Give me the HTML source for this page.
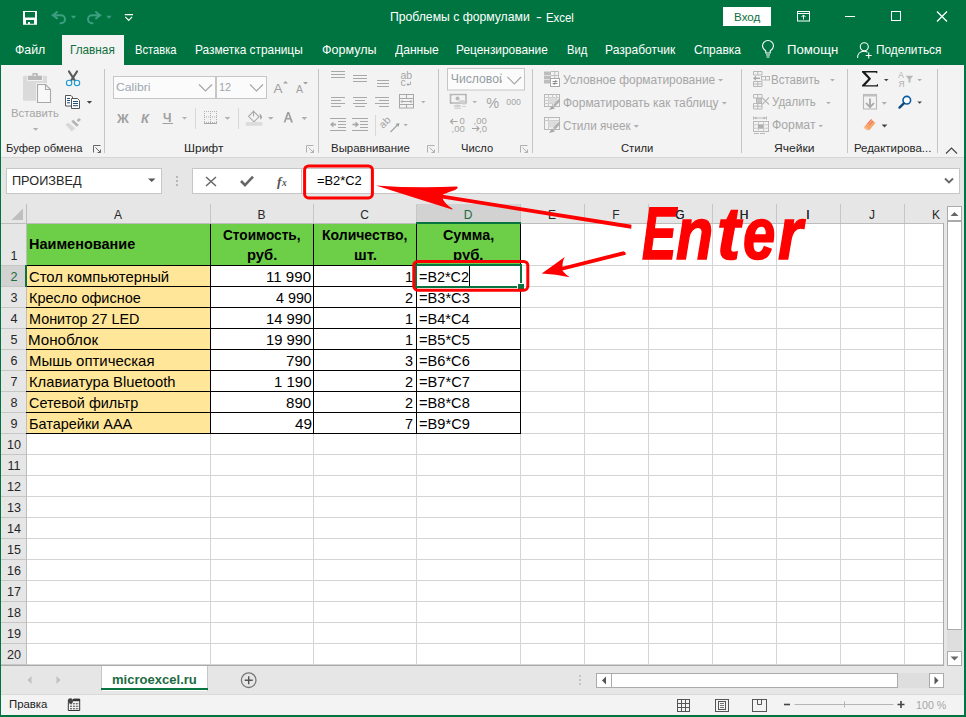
<!DOCTYPE html><html><head><meta charset="utf-8"><style>
*{box-sizing:border-box;margin:0;padding:0}
html,body{width:966px;height:717px;overflow:hidden;background:#fff;font-family:"Liberation Sans", sans-serif;}
.a{position:absolute;white-space:nowrap}
.t{position:absolute;white-space:nowrap;line-height:1}
</style></head><body>

<div class="a" style="left:0;top:0;width:966px;height:65px;background:#007440"></div>
<div class="t" style="left:390.02px;top:11.40px;font-size:12.4px;color:#fff;font-weight:normal;font-style:normal;transform:scaleX(0.9840);transform-origin:0 0;">Проблемы с формулами</div>
<div class="t" style="left:535.91px;top:11.40px;font-size:12.4px;color:#fff;font-weight:normal;font-style:normal;transform:scaleX(1.4154);transform-origin:0 0;">-</div>
<div class="t" style="left:546.49px;top:11.74px;font-size:12.0px;color:#fff;font-weight:normal;font-style:normal;transform:scaleX(0.9493);transform-origin:0 0;">Excel</div>
<svg class="a" style="left:0;top:0" width="160" height="35" viewBox="0 0 160 35"><path fill="#fff" fill-rule="evenodd" d="M23 11h14v13.7h-14z M25 12h10v5.5h-10z M26 20h8v3.7h-4v-1.7h-2v1.7h-2z"/><g fill="none" stroke="#3c9f80" stroke-width="2" stroke-linejoin="round" stroke-linecap="round"><path d="M57 12l-4 3.2 4 3.2M52.5 15.2h8.5a4 4 0 0 1 0 8h-0.5"/><path d="M96 12l4 3.2-4 3.2M100.5 15.2h-8.5a4 4 0 0 0 0 8h0.5"/></g><path fill="#3c9f80" d="M70.8 15.8h5.5l-2.75 3z M106.2 15.8h5.5l-2.75 3z"/><path fill="none" stroke="#fff" stroke-width="1.2" d="M124.8 14.6h8.2M125.3 16.8l3.4 3.6 3.4-3.6"/></svg>
<div class="a" style="left:723px;top:7px;width:48px;height:19px;background:#fff"></div>
<div class="t" style="left:733.67px;top:11.38px;font-size:11.6px;color:#107040;font-weight:normal;font-style:normal;transform:scaleX(1.0034);transform-origin:0 0;">Вход</div>
<svg class="a" style="left:780px;top:0" width="186" height="35" viewBox="780 0 186 35"><g fill="none" stroke="#fff" stroke-width="1"><rect x="797.5" y="11.5" width="12" height="9.5"/><path d="M798 13.5h11M803.5 19.5v-4.5M801.5 17l2-2 2 2"/><path d="M845 16.5h10"/><rect x="891.5" y="11.5" width="9" height="9"/><path d="M937 11.5l10 10M947 11.5l-10 10" stroke-width="1.3"/></g></svg>
<div class="t" style="left:15.22px;top:43.70px;font-size:12.4px;color:#fff;font-weight:normal;font-style:normal;transform:scaleX(0.9947);transform-origin:0 0;">Файл</div>
<div class="t" style="left:134.90px;top:43.70px;font-size:12.4px;color:#fff;font-weight:normal;font-style:normal;transform:scaleX(0.9030);transform-origin:0 0;">Вставка</div>
<div class="t" style="left:195.45px;top:43.70px;font-size:12.4px;color:#fff;font-weight:normal;font-style:normal;transform:scaleX(0.9578);transform-origin:0 0;">Разметка страницы</div>
<div class="t" style="left:321.61px;top:43.70px;font-size:12.4px;color:#fff;font-weight:normal;font-style:normal;transform:scaleX(1.0104);transform-origin:0 0;">Формулы</div>
<div class="t" style="left:395.04px;top:43.70px;font-size:12.4px;color:#fff;font-weight:normal;font-style:normal;transform:scaleX(0.9764);transform-origin:0 0;">Данные</div>
<div class="t" style="left:456.45px;top:43.70px;font-size:12.4px;color:#fff;font-weight:normal;font-style:normal;transform:scaleX(0.9599);transform-origin:0 0;">Рецензирование</div>
<div class="t" style="left:566.50px;top:43.70px;font-size:12.4px;color:#fff;font-weight:normal;font-style:normal;transform:scaleX(0.9055);transform-origin:0 0;">Вид</div>
<div class="t" style="left:605.44px;top:43.70px;font-size:12.4px;color:#fff;font-weight:normal;font-style:normal;transform:scaleX(0.9725);transform-origin:0 0;">Разработчик</div>
<div class="t" style="left:694.10px;top:43.70px;font-size:12.4px;color:#fff;font-weight:normal;font-style:normal;transform:scaleX(0.9648);transform-origin:0 0;">Справка</div>
<div class="t" style="left:787.25px;top:43.70px;font-size:12.4px;color:#fff;font-weight:normal;font-style:normal;transform:scaleX(1.0616);transform-origin:0 0;">Помощн</div>
<div class="t" style="left:875.65px;top:43.70px;font-size:12.4px;color:#fff;font-weight:normal;font-style:normal;transform:scaleX(0.9557);transform-origin:0 0;">Поделиться</div>
<div class="a" style="left:62px;top:35px;width:62px;height:31px;background:#f3f3f3"></div>
<div class="t" style="left:70.26px;top:43.70px;font-size:12.4px;color:#107040;font-weight:normal;font-style:normal;transform:scaleX(0.9497);transform-origin:0 0;">Главная</div>
<svg class="a" style="left:750px;top:35px" width="140" height="30" viewBox="750 35 140 30"><g fill="none" stroke="#fff" stroke-width="1.1"><path d="M766 55h4M766.5 57h3M765.8 53v-2c-2-1.5-3.3-3-3.3-5a5.5 5.5 0 0 1 11 0c0 2-1.3 3.5-3.3 5v2z"/><circle cx="864.3" cy="46.8" r="4"/><path d="M857.5 58c0-4 2.5-6.8 6.5-6.8c1.5 0 2.5 .3 3.5 1M868.7 52.5v6M865.7 55.5h6"/></g></svg>
<div class="a" style="left:1px;top:65px;width:963px;height:92px;background:#f3f3f3"></div>
<div class="a" style="left:1px;top:157px;width:963px;height:1px;background:#d6d6d6"></div>
<svg class="a" style="left:0;top:65px" width="966" height="92" viewBox="0 65 966 92"><path d="M104.5 69v84" stroke="#c4c4c4" stroke-width="1"/><path d="M318.5 69v84" stroke="#c4c4c4" stroke-width="1"/><path d="M438.5 69v84" stroke="#c4c4c4" stroke-width="1"/><path d="M532.5 69v84" stroke="#c4c4c4" stroke-width="1"/><path d="M741.5 69v84" stroke="#c4c4c4" stroke-width="1"/><path d="M847.5 69v84" stroke="#c4c4c4" stroke-width="1"/><path d="M937.5 69v84" stroke="#c4c4c4" stroke-width="1"/><path d="M195.5 108v21M238.5 108v21M375.5 115v21" stroke="#d8d8d8"/><path d="M32.9 128h5.5l-2.75 2.75z" fill="#b0b0b0"/><path d="M86.8 101h5.299999999999997l-2.6499999999999986 2.6499999999999986z" fill="#444"/><path d="M182 117h5l-2.5 2.5z" fill="#b0b0b0"/><path d="M224.6 117h5.700000000000017l-2.8500000000000085 2.8500000000000085z" fill="#b0b0b0"/><path d="M267.9 117h5.7000000000000455l-2.8500000000000227 2.8500000000000227z" fill="#b0b0b0"/><path d="M301.4 117h5.900000000000034l-2.950000000000017 2.950000000000017z" fill="#b0b0b0"/><path d="M421 101h4.5l-2.25 2.25z" fill="#b0b0b0"/><path d="M403.4 124h4.600000000000023l-2.3000000000000114 2.3000000000000114z" fill="#b0b0b0"/><path d="M472.4 101h4.600000000000023l-2.3000000000000114 2.3000000000000114z" fill="#b0b0b0"/><path d="M718 79h5.2000000000000455l-2.6000000000000227 2.6000000000000227z" fill="#b0b0b0"/><path d="M721.8 102h5.2000000000000455l-2.6000000000000227 2.6000000000000227z" fill="#b0b0b0"/><path d="M633.6 125h5.2999999999999545l-2.6499999999999773 2.6499999999999773z" fill="#b0b0b0"/><path d="M830 79h4.7999999999999545l-2.3999999999999773 2.3999999999999773z" fill="#b0b0b0"/><path d="M826.1 102h4.699999999999932l-2.349999999999966 2.349999999999966z" fill="#b0b0b0"/><path d="M818.4 125h4.600000000000023l-2.3000000000000114 2.3000000000000114z" fill="#b0b0b0"/><path d="M881.6 102h5.399999999999977l-2.6999999999999886 2.6999999999999886z" fill="#b0b0b0"/><path d="M917.3 79h4.7000000000000455l-2.3500000000000227 2.3500000000000227z" fill="#b0b0b0"/><path d="M883.9 79h4.7000000000000455l-2.3500000000000227 2.3500000000000227z" fill="#444"/><path d="M917.3 101.5h4.7000000000000455l-2.3500000000000227 2.3500000000000227z" fill="#444"/><path d="M881.6 124.5h5.7999999999999545l-2.8999999999999773 2.8999999999999773z" fill="#444"/><path d="M306.5 152.5v-7h7M308.5 147.5l5 5M313.5 149.5v3h-3" fill="none" stroke="#b0b0b0" stroke-width="1"/><path d="M427.5 152.5v-7h7M429.5 147.5l5 5M434.5 149.5v3h-3" fill="none" stroke="#b0b0b0" stroke-width="1"/><path d="M520.5 152.5v-7h7M522.5 147.5l5 5M527.5 149.5v3h-3" fill="none" stroke="#b0b0b0" stroke-width="1"/><path d="M93.5 152.5v-7h7M95.5 147.5l5 5M100.5 149.5v3h-3" fill="none" stroke="#666" stroke-width="1"/><path d="M946 153.5l5.5-5.5 5.5 5.5" fill="none" stroke="#444" stroke-width="1.1"/><rect x="23" y="75.8" width="24" height="25" rx="1.2" fill="#dadada"/><path d="M27.3 81v-5.8h4.5v-2.5h6.6v2.5h4.5v5.8z" fill="#f3f3f3"/><path d="M28 80v-4.2h4.5v-2.8h5.3v2.8h4.2v4.2z" fill="#b8b8b8"/><rect x="34" y="74.5" width="1.8" height="1.6" fill="#f3f3f3"/><path d="M36 83h10l6 6v14.8h-16z" fill="#f3f3f3"/><path d="M37.5 84.5h8l5 5v13h-13z" fill="#f8f8f8" stroke="#a8a8a8" stroke-width="1.1"/><path d="M45.5 84.5v5h5" fill="none" stroke="#a8a8a8" stroke-width="1.1"/><path d="M69 71.5L74.5 80M77 71.5L71.5 80" stroke="#595959" stroke-width="2.2" stroke-linecap="round"/><circle cx="69.1" cy="83" r="2.7" fill="#f3f3f3" stroke="#1c9bd0" stroke-width="1.1"/><circle cx="77" cy="83" r="2.7" fill="#f3f3f3" stroke="#1c9bd0" stroke-width="1.1"/><path d="M65.5 95.5h5.5l1.5 1.5v9h-7z" fill="#fff" stroke="#555"/><path d="M71.5 98.5h6l2 2v8h-8z" fill="#fff" stroke="#555"/><path d="M67 98.5h3M67 100.5h3M67 102.8h3M73 101.5h5M73 103.5h5M73 105.7h5" stroke="#1f4e79" stroke-width="1"/><path d="M65.4 124.4L68.5 122.8L75.4 128.2L71.7 131.4z" fill="#d8d8d8"/><path d="M71.2 121.6L73.2 119.8L78.9 124.9L76.8 126.8z" fill="#b4b4b4"/><path d="M76.6 120.3L79 117.9L81 119.8L78.5 122.1z" fill="#b4b4b4"/><rect x="113.5" y="76.5" width="102" height="22" fill="#fbfbfb" stroke="#c6c6c6"/><rect x="216.5" y="76.5" width="50" height="22" fill="#fbfbfb" stroke="#c6c6c6"/><path d="M199 84.5l6.5 6.5 6.5-6.5M250 84.5l6.5 6.5 6.5-6.5" fill="none" stroke="#a6a6a6" stroke-width="1.2"/><rect x="447.5" y="68.5" width="77" height="21.5" fill="#fbfbfb" stroke="#c6c6c6"/><path d="M507.5 77l6.8 6.8 6.8-6.8" fill="none" stroke="#a6a6a6" stroke-width="1.2"/><text x="273.5" y="92.8" font-family="Liberation Sans" font-size="13.5" fill="#a0a0a0">A</text><path d="M283 83.5l2.5-2.5 2.5 2.5z" fill="#a0a0a0"/><text x="296" y="92.8" font-family="Liberation Sans" font-size="10.5" fill="#a0a0a0">A</text><path d="M303 82h5l-2.5 2.5z" fill="#a0a0a0"/><text x="117" y="123" font-family="Liberation Sans" font-weight="bold" font-size="13" fill="#a0a0a0">Ж</text><text x="141" y="123" font-family="Liberation Sans" font-weight="bold" font-style="italic" font-size="13" fill="#a0a0a0">К</text><text x="163" y="121.5" font-family="Liberation Sans" font-weight="bold" font-size="12" fill="#a0a0a0">Ч</text><path d="M162.5 123.5h10.5" stroke="#a0a0a0" stroke-width="1"/><g fill="#b4b4b4"><rect x="204.0" y="111.0" width="1" height="1"/><rect x="204.0" y="116.5" width="1" height="1"/><rect x="204.0" y="122.0" width="1" height="1"/><rect x="206.0" y="111.0" width="1" height="1"/><rect x="206.0" y="116.5" width="1" height="1"/><rect x="206.0" y="122.0" width="1" height="1"/><rect x="208.0" y="111.0" width="1" height="1"/><rect x="208.0" y="116.5" width="1" height="1"/><rect x="208.0" y="122.0" width="1" height="1"/><rect x="210.0" y="111.0" width="1" height="1"/><rect x="210.0" y="116.5" width="1" height="1"/><rect x="210.0" y="122.0" width="1" height="1"/><rect x="212.0" y="111.0" width="1" height="1"/><rect x="212.0" y="116.5" width="1" height="1"/><rect x="212.0" y="122.0" width="1" height="1"/><rect x="214.0" y="111.0" width="1" height="1"/><rect x="214.0" y="116.5" width="1" height="1"/><rect x="214.0" y="122.0" width="1" height="1"/><rect x="216.0" y="111.0" width="1" height="1"/><rect x="216.0" y="116.5" width="1" height="1"/><rect x="216.0" y="122.0" width="1" height="1"/><rect x="204.0" y="111.0" width="1" height="1"/><rect x="204.0" y="113.0" width="1" height="1"/><rect x="204.0" y="115.0" width="1" height="1"/><rect x="204.0" y="117.0" width="1" height="1"/><rect x="204.0" y="119.0" width="1" height="1"/><rect x="204.0" y="121.0" width="1" height="1"/><rect x="210.0" y="111.0" width="1" height="1"/><rect x="210.0" y="113.0" width="1" height="1"/><rect x="210.0" y="115.0" width="1" height="1"/><rect x="210.0" y="117.0" width="1" height="1"/><rect x="210.0" y="119.0" width="1" height="1"/><rect x="210.0" y="121.0" width="1" height="1"/><rect x="216.0" y="111.0" width="1" height="1"/><rect x="216.0" y="113.0" width="1" height="1"/><rect x="216.0" y="115.0" width="1" height="1"/><rect x="216.0" y="117.0" width="1" height="1"/><rect x="216.0" y="119.0" width="1" height="1"/><rect x="216.0" y="121.0" width="1" height="1"/></g><path d="M204 123.5h13" stroke="#a8a8a8" stroke-width="1"/><path d="M248.5 116.3l5-5 5.5 5.5-5 5z" fill="none" stroke="#a8a8a8" stroke-width="1.1"/><path d="M253.5 110.5v6" stroke="#a8a8a8" stroke-width="1.1"/><path d="M259.5 113.5q2.5 1.5 2.5 4l-1.5 2.5z" fill="#a0a0a0"/><rect x="245.8" y="122" width="16.5" height="3.8" fill="#dcdcdc"/><path d="M283.6 122.5l3.7-10.6h1.9l3.8 10.6h-2l-1-2.9h-3.6l-1 2.9zM287.1 118h2.4l-1.2-3.7z" fill="#a0a0a0"/><path d="M331 71.5H345" stroke="#a8a8a8" stroke-width="1"/><path d="M331 74.5H345" stroke="#a8a8a8" stroke-width="1"/><path d="M331 77.5H345" stroke="#a8a8a8" stroke-width="1"/><path d="M353 75.5H367" stroke="#a8a8a8" stroke-width="1"/><path d="M353 78.5H367" stroke="#a8a8a8" stroke-width="1"/><path d="M353 81.5H367" stroke="#a8a8a8" stroke-width="1"/><path d="M377 80.5H389" stroke="#a8a8a8" stroke-width="1"/><path d="M377 83.5H389" stroke="#a8a8a8" stroke-width="1"/><path d="M377 86.5H389" stroke="#a8a8a8" stroke-width="1"/><path d="M331 97.5H345" stroke="#a8a8a8" stroke-width="1"/><path d="M331 100.5H341" stroke="#a8a8a8" stroke-width="1"/><path d="M331 103.5H345" stroke="#a8a8a8" stroke-width="1"/><path d="M331 106.5H341" stroke="#a8a8a8" stroke-width="1"/><path d="M353 97.5H367" stroke="#a8a8a8" stroke-width="1"/><path d="M355 100.5H365" stroke="#a8a8a8" stroke-width="1"/><path d="M353 103.5H367" stroke="#a8a8a8" stroke-width="1"/><path d="M355 106.5H365" stroke="#a8a8a8" stroke-width="1"/><path d="M375 97.5H389" stroke="#a8a8a8" stroke-width="1"/><path d="M379 100.5H389" stroke="#a8a8a8" stroke-width="1"/><path d="M375 103.5H389" stroke="#a8a8a8" stroke-width="1"/><path d="M379 106.5H389" stroke="#a8a8a8" stroke-width="1"/><text x="400.5" y="78.8" font-family="Liberation Sans" font-size="10.5" fill="#a6a6a6">ab</text><text x="400.5" y="86.3" font-family="Liberation Sans" font-size="10.5" fill="#a6a6a6">c</text><path d="M410.5 81.5v3h-3.5M408.5 83l-1.5 1.5 1.5 1.5" fill="none" stroke="#a6a6a6" stroke-width=".9"/><rect x="399.5" y="94.5" width="14" height="13.5" fill="none" stroke="#a8a8a8"/><path d="M399.5 98.5h14M399.5 104.5h14M406.5 94.5v4M406.5 104.5v3.5M401.5 101.5h10M402.5 100l-1.5 1.5 1.5 1.5M410.5 100l1.5 1.5-1.5 1.5" fill="none" stroke="#a8a8a8"/><path d="M330 118.5h16M338 121.5h8M338 124.5h8M338 127.5h8M330 130.5h16" fill="none" stroke="#a8a8a8"/><path d="M331 124.5h5" stroke="#a8a8a8" stroke-width="1.8"/><path d="M330 124.5l3.5-3v6z" fill="#a8a8a8"/><path d="M352 118.5h16M360 121.5h8M360 124.5h8M360 127.5h8M352 130.5h16" fill="none" stroke="#a8a8a8"/><path d="M352.5 124.5h5" stroke="#a8a8a8" stroke-width="1.8"/><path d="M359 124.5l-3.5-3v6z" fill="#a8a8a8"/><text x="383" y="129" font-family="Liberation Sans" font-size="10.5" fill="#a6a6a6" transform="rotate(-45 383 129)">ab</text><path d="M390.5 132l8-8" fill="none" stroke="#a0a0a0" stroke-width="1.1"/><path d="M399.5 123l-1 4-3-3z" fill="#a0a0a0"/><path d="M450.5 94.5h15.5v8.5h-15.5z" fill="none" stroke="#b8b8b8" stroke-width="1.6"/><path d="M450 94h3l-3 3zM466.5 94h-3l3 3zM450 103.5h3l-3-3z" fill="#b8b8b8"/><circle cx="457.5" cy="98.6" r="2" fill="#b8b8b8"/><ellipse cx="462" cy="101.5" rx="3.5" ry="1.5" fill="#d0d0d0"/><ellipse cx="457.5" cy="106" rx="3.5" ry="1.5" fill="#d0d0d0"/><path d="M454 108.5h7M462 104h4M462 106.5h4" stroke="#d4d4d4" stroke-width="1.1"/><text x="486.3" y="107.8" font-family="Liberation Sans" font-size="14.5" fill="#a6a6a6">%</text><text x="506.3" y="104.9" font-family="Liberation Sans" font-size="9.6" fill="#a6a6a6" textLength="14.6" lengthAdjust="spacingAndGlyphs">000</text><text x="459.5" y="124" font-family="Liberation Sans" font-size="9.5" fill="#a6a6a6">0</text><text x="451.5" y="131.5" font-family="Liberation Sans" font-size="9.5" fill="#a6a6a6">,00</text><path d="M450.5 121.5h7M453 119l-2.5 2.5 2.5 2.5" fill="none" stroke="#a6a6a6" stroke-width="1.1"/><text x="473.5" y="124" font-family="Liberation Sans" font-size="9.5" fill="#a6a6a6">,00</text><text x="479" y="131.5" font-family="Liberation Sans" font-size="9.5" fill="#a6a6a6">,0</text><path d="M472 128.5h7M476.5 126l2.5 2.5-2.5 2.5" fill="none" stroke="#a6a6a6" stroke-width="1.1"/><rect x="544" y="71.5" width="7" height="12" fill="#bdbdbd"/><path d="M544 75.5h7M544 79.5h7" stroke="#dedede"/><path d="M551 71.5h7.5v12M551 75.5h7.5M554.75 71.5v7" fill="none" stroke="#bdbdbd"/><rect x="550.5" y="78.5" width="9" height="8" fill="#fff" stroke="#a8a8a8"/><path d="M552.5 81.5h5M552.5 83.5h5M556 80l-2 5" stroke="#777" stroke-width=".8"/><rect x="544.5" y="94.5" width="15" height="12" fill="none" stroke="#b8b8b8"/><path d="M544.5 97.5h15M544.5 100.5h11M544.5 103.5h8M548.5 94.5v12M552.5 94.5v12M556.5 94.5v6" stroke="#c8c8c8"/><rect x="548.5" y="97.5" width="8" height="6" fill="#dcdcdc"/><path d="M553 105l7-7.5v4l-5 5z" fill="#b0b0b0"/><path d="M549 110l3-4.5 3 3z" fill="#a8a8a8"/><rect x="544.5" y="117.5" width="15" height="12" fill="none" stroke="#b8b8b8"/><path d="M544.5 120.5h15M548.5 117.5v12" stroke="#c8c8c8"/><rect x="548.5" y="120.5" width="9" height="7" fill="#dcdcdc"/><path d="M553 128l7-7.5v4l-5 5z" fill="#b0b0b0"/><path d="M549 133l3-4.5 3 3z" fill="#a8a8a8"/><path d="M753.5 71.5h8.5v3.5h-8.5zM757.75 71.5v3.5M753.5 81.5h8.5v5h-8.5zM753.5 84h8.5M757.75 81.5v5" fill="none" stroke="#b8b8b8"/><rect x="761.5" y="76.5" width="8" height="3.5" fill="none" stroke="#b8b8b8"/><path d="M765.5 76.5v3.5" stroke="#b8b8b8"/><path d="M754 78.3h6" stroke="#a8a8a8" stroke-width="1.4"/><path d="M753 78.3l3-2.5v5z" fill="#a8a8a8"/><path d="M753.5 94.5h8.5v3.5h-8.5zM757.75 94.5v3.5M753.5 103.5h8.5v5.5h-8.5zM753.5 106.2h8.5M757.75 103.5v5.5" fill="none" stroke="#b8b8b8"/><rect x="756.5" y="98.5" width="5" height="4.5" fill="#c8c8c8" stroke="#b8b8b8"/><path d="M762 97.5l7 7M769 97.5l-7 7" stroke="#b8b8b8" stroke-width="1.2"/><path d="M753.5 116.5v3M766.5 116.5v3M754 118h12" stroke="#b8b8b8"/><path d="M754 118l2.5-1.5v3zM766 118l-2.5-1.5v3z" fill="#b8b8b8"/><rect x="753.5" y="121.5" width="15" height="10" fill="none" stroke="#b8b8b8"/><path d="M753.5 124.8h15M753.5 128.2h15M758.5 121.5v10M763.5 121.5v10" stroke="#cacaca"/><rect x="758" y="124.5" width="5.5" height="4" fill="#b0b0b0"/><path d="M754 133.5h5M760 133.5h5" stroke="#b8b8b8"/><path d="M862 71h15.3v2.3h-0.8l-0.6-0.9h-10.4l5.6 6.3-5.8 6.5h11.2l.6-.9h.9v2.2H862v-1.3l6.3-6.5-6.3-6.4z" fill="#1a1a1a"/><text x="898.3" y="77.8" font-family="Liberation Sans" font-size="8.4" fill="#b0b0b0">А</text><text x="898.5" y="86.5" font-family="Liberation Sans" font-size="8.4" fill="#b0b0b0">Я</text><path d="M905.8 75.8h7.3l-2.6 3.5v3.3h-2v-3.3z" fill="#b8b8b8"/><rect x="863.5" y="94.5" width="13" height="14.5" fill="none" stroke="#b8b8b8" stroke-width="1.1"/><rect x="863.5" y="94.5" width="13" height="2" fill="#c0c0c0"/><path d="M870 98.5v8" stroke="#a8a8a8" stroke-width="1.8"/><path d="M866 103l4 4.2 4-4.2" fill="none" stroke="#a8a8a8" stroke-width="1.8"/><circle cx="906.8" cy="100.2" r="3.8" fill="#fff" stroke="#0a5a9c" stroke-width="1.6"/><path d="M903.8 103.3l-4.3 4.3" stroke="#0b4a80" stroke-width="2.4" stroke-linecap="round"/><path d="M864.5 126.5l6.5-7.5 4.5 4-6.5 7.5z" fill="#f7a66c"/><path d="M867.5 124l4-4.5M869 125.5l4-4.5" stroke="#ee6a6a" stroke-width="1"/><path d="M864 127l3.5 3" stroke="#f9b987" stroke-width="1.4"/></svg>
<div class="t" style="left:5.70px;top:143.45px;font-size:11.4px;color:#262626;font-weight:normal;font-style:normal;transform:scaleX(0.9876);transform-origin:0 0;">Буфер обмена</div>
<div class="t" style="left:183.74px;top:143.05px;font-size:11.4px;color:#262626;font-weight:normal;font-style:normal;transform:scaleX(1.0532);transform-origin:0 0;">Шрифт</div>
<div class="t" style="left:330.78px;top:143.05px;font-size:11.4px;color:#262626;font-weight:normal;font-style:normal;transform:scaleX(1.0051);transform-origin:0 0;">Выравнивание</div>
<div class="t" style="left:460.61px;top:143.05px;font-size:11.4px;color:#262626;font-weight:normal;font-style:normal;transform:scaleX(0.9807);transform-origin:0 0;">Число</div>
<div class="t" style="left:621.04px;top:143.05px;font-size:11.4px;color:#262626;font-weight:normal;font-style:normal;transform:scaleX(0.9853);transform-origin:0 0;">Стили</div>
<div class="t" style="left:774.00px;top:142.55px;font-size:11.4px;color:#262626;font-weight:normal;font-style:normal;transform:scaleX(1.0602);transform-origin:0 0;">Ячейки</div>
<div class="t" style="left:853.69px;top:142.55px;font-size:11.4px;color:#262626;font-weight:normal;font-style:normal;transform:scaleX(1.0006);transform-origin:0 0;">Редактирова...</div>
<div class="t" style="left:10.80px;top:108.01px;font-size:11.8px;color:#a6a6a6;font-weight:normal;font-style:normal;transform:scaleX(0.9585);transform-origin:0 0;">Вставить</div>
<div class="t" style="left:116.19px;top:81.91px;font-size:11.8px;color:#9ea7b0;font-weight:normal;font-style:normal;transform:scaleX(1.0332);transform-origin:0 0;">Calibri</div>
<div class="t" style="left:219.19px;top:81.91px;font-size:11.8px;color:#9ea7b0;font-weight:normal;font-style:normal;transform:scaleX(0.9206);transform-origin:0 0;">12</div>
<div class="a" style="left:450px;top:72px;width:52px;height:16px;overflow:hidden">
<div class="t" style="left:0.8px;top:0.97px;font-size:12.2px;color:#949ca4;font-weight:normal;font-style:normal;">Числовой</div>
</div>
<div class="t" style="left:563.34px;top:74.24px;font-size:12.0px;color:#a6a6a6;font-weight:normal;font-style:normal;transform:scaleX(0.9971);transform-origin:0 0;">Условное форматирование</div>
<div class="t" style="left:563.04px;top:96.94px;font-size:12.0px;color:#a6a6a6;font-weight:normal;font-style:normal;transform:scaleX(0.9964);transform-origin:0 0;">Форматировать как таблицу</div>
<div class="t" style="left:563.11px;top:119.74px;font-size:12.0px;color:#a6a6a6;font-weight:normal;font-style:normal;transform:scaleX(0.9753);transform-origin:0 0;">Стили ячеек</div>
<div class="t" style="left:771.38px;top:74.04px;font-size:12.0px;color:#a6a6a6;font-weight:normal;font-style:normal;transform:scaleX(0.9567);transform-origin:0 0;">Вставить</div>
<div class="t" style="left:771.96px;top:96.44px;font-size:12.0px;color:#a6a6a6;font-weight:normal;font-style:normal;transform:scaleX(0.9568);transform-origin:0 0;">Удалить</div>
<div class="t" style="left:771.63px;top:119.14px;font-size:12.0px;color:#a6a6a6;font-weight:normal;font-style:normal;transform:scaleX(1.0201);transform-origin:0 0;">Формат</div>
<div class="a" style="left:1px;top:158px;width:963px;height:536px;background:#e6e6e6"></div>
<div class="a" style="left:6px;top:168px;width:156px;height:26px;background:#fff;border:1px solid #c6c6c6"></div>
<div class="t" style="left:12.48px;top:175.46px;font-size:12.8px;color:#262626;font-weight:normal;font-style:normal;transform:scaleX(0.9918);transform-origin:0 0;">ПРОИЗВЕД</div>
<svg class="a" style="left:140px;top:165px" width="60" height="30" viewBox="140 165 60 30"><path d="M148 178.5h7.5l-3.75 3.5z" fill="#555"/><circle cx="177" cy="177" r=".9" fill="#a0a0a0"/><circle cx="177" cy="181" r=".9" fill="#a0a0a0"/><circle cx="177" cy="185" r=".9" fill="#a0a0a0"/></svg>
<div class="a" style="left:192px;top:168px;width:110px;height:26px;background:#fff;border:1px solid #c6c6c6"></div>
<div class="a" style="left:301px;top:168px;width:659px;height:26px;background:#fff;border:1px solid #c6c6c6"></div>
<svg class="a" style="left:190px;top:165px" width="780" height="35" viewBox="190 165 780 35"><path d="M206 177l10 9M216 177l-10 9" stroke="#666" stroke-width="1.5"/><path d="M241 181l4 4.2 8-8.5" fill="none" stroke="#666" stroke-width="2.6"/><text x="277" y="185.5" font-family="Liberation Serif" font-style="italic" font-weight="bold" font-size="13.5" fill="#555">f</text><text x="282" y="186" font-family="Liberation Serif" font-style="italic" font-weight="bold" font-size="9.5" fill="#555">x</text><path d="M945 178.5l4 4 4-4" fill="none" stroke="#666" stroke-width="1.8"/></svg>
<div class="t" style="left:316.86px;top:175.16px;font-size:12.8px;color:#000;font-weight:normal;font-style:normal;transform:scaleX(1.0069);transform-origin:0 0;">=B2*C2</div>
<div class="a" style="left:27px;top:224px;width:917px;height:442px;background:#fff"></div>
<div class="a" style="left:417px;top:204px;width:103px;height:19px;background:#d2d2d2"></div>
<div class="a" style="left:0;top:266px;width:26px;height:20px;background:#d2d2d2"></div>
<div class="a" style="left:210px;top:204px;width:1px;height:20px;background:#c6c6c6"></div>
<div class="a" style="left:210px;top:224px;width:1px;height:442px;background:#d4d4d4"></div>
<div class="t" style="left:88.0px;width:60px;text-align:center;top:208.94px;font-size:12.0px;color:#262626;font-weight:normal;font-style:normal;">A</div>
<div class="a" style="left:313px;top:204px;width:1px;height:20px;background:#c6c6c6"></div>
<div class="a" style="left:313px;top:224px;width:1px;height:442px;background:#d4d4d4"></div>
<div class="t" style="left:231.5px;width:60px;text-align:center;top:208.94px;font-size:12.0px;color:#262626;font-weight:normal;font-style:normal;">B</div>
<div class="a" style="left:416px;top:204px;width:1px;height:20px;background:#c6c6c6"></div>
<div class="a" style="left:416px;top:224px;width:1px;height:442px;background:#d4d4d4"></div>
<div class="t" style="left:334.5px;width:60px;text-align:center;top:208.94px;font-size:12.0px;color:#262626;font-weight:normal;font-style:normal;">C</div>
<div class="a" style="left:520px;top:204px;width:1px;height:20px;background:#c6c6c6"></div>
<div class="a" style="left:520px;top:224px;width:1px;height:442px;background:#d4d4d4"></div>
<div class="t" style="left:438.0px;width:60px;text-align:center;top:208.94px;font-size:12.0px;color:#1e6b43;font-weight:normal;font-style:normal;">D</div>
<div class="a" style="left:584px;top:204px;width:1px;height:20px;background:#c6c6c6"></div>
<div class="a" style="left:584px;top:224px;width:1px;height:442px;background:#d4d4d4"></div>
<div class="t" style="left:522.0px;width:60px;text-align:center;top:208.94px;font-size:12.0px;color:#262626;font-weight:normal;font-style:normal;">E</div>
<div class="a" style="left:648px;top:204px;width:1px;height:20px;background:#c6c6c6"></div>
<div class="a" style="left:648px;top:224px;width:1px;height:442px;background:#d4d4d4"></div>
<div class="t" style="left:586.0px;width:60px;text-align:center;top:208.94px;font-size:12.0px;color:#262626;font-weight:normal;font-style:normal;">F</div>
<div class="a" style="left:712px;top:204px;width:1px;height:20px;background:#c6c6c6"></div>
<div class="a" style="left:712px;top:224px;width:1px;height:442px;background:#d4d4d4"></div>
<div class="t" style="left:650.0px;width:60px;text-align:center;top:208.94px;font-size:12.0px;color:#262626;font-weight:normal;font-style:normal;">G</div>
<div class="a" style="left:776px;top:204px;width:1px;height:20px;background:#c6c6c6"></div>
<div class="a" style="left:776px;top:224px;width:1px;height:442px;background:#d4d4d4"></div>
<div class="t" style="left:714.0px;width:60px;text-align:center;top:208.94px;font-size:12.0px;color:#262626;font-weight:normal;font-style:normal;">H</div>
<div class="a" style="left:840px;top:204px;width:1px;height:20px;background:#c6c6c6"></div>
<div class="a" style="left:840px;top:224px;width:1px;height:442px;background:#d4d4d4"></div>
<div class="t" style="left:778.0px;width:60px;text-align:center;top:208.94px;font-size:12.0px;color:#262626;font-weight:normal;font-style:normal;">I</div>
<div class="a" style="left:904px;top:204px;width:1px;height:20px;background:#c6c6c6"></div>
<div class="a" style="left:904px;top:224px;width:1px;height:442px;background:#d4d4d4"></div>
<div class="t" style="left:842.0px;width:60px;text-align:center;top:208.94px;font-size:12.0px;color:#262626;font-weight:normal;font-style:normal;">J</div>
<div class="a" style="left:968px;top:204px;width:1px;height:20px;background:#c6c6c6"></div>
<div class="a" style="left:968px;top:224px;width:1px;height:442px;background:#d4d4d4"></div>
<div class="t" style="left:906.0px;width:60px;text-align:center;top:208.94px;font-size:12.0px;color:#262626;font-weight:normal;font-style:normal;">K</div>
<div class="a" style="left:27px;top:265px;width:917px;height:1px;background:#d4d4d4"></div>
<div class="a" style="left:1px;top:265px;width:26px;height:1px;background:#c6c6c6"></div>
<div class="t" style="left:1.0px;width:26px;text-align:center;top:250.03px;font-size:12.6px;color:#262626;font-weight:normal;font-style:normal;">1</div>
<div class="a" style="left:27px;top:286px;width:917px;height:1px;background:#d4d4d4"></div>
<div class="a" style="left:1px;top:286px;width:26px;height:1px;background:#c6c6c6"></div>
<div class="t" style="left:1.0px;width:26px;text-align:center;top:271.03px;font-size:12.6px;color:#1e6b43;font-weight:normal;font-style:normal;">2</div>
<div class="a" style="left:27px;top:307px;width:917px;height:1px;background:#d4d4d4"></div>
<div class="a" style="left:1px;top:307px;width:26px;height:1px;background:#c6c6c6"></div>
<div class="t" style="left:1.0px;width:26px;text-align:center;top:292.03px;font-size:12.6px;color:#262626;font-weight:normal;font-style:normal;">3</div>
<div class="a" style="left:27px;top:328px;width:917px;height:1px;background:#d4d4d4"></div>
<div class="a" style="left:1px;top:328px;width:26px;height:1px;background:#c6c6c6"></div>
<div class="t" style="left:1.0px;width:26px;text-align:center;top:313.03px;font-size:12.6px;color:#262626;font-weight:normal;font-style:normal;">4</div>
<div class="a" style="left:27px;top:349px;width:917px;height:1px;background:#d4d4d4"></div>
<div class="a" style="left:1px;top:349px;width:26px;height:1px;background:#c6c6c6"></div>
<div class="t" style="left:1.0px;width:26px;text-align:center;top:334.03px;font-size:12.6px;color:#262626;font-weight:normal;font-style:normal;">5</div>
<div class="a" style="left:27px;top:370px;width:917px;height:1px;background:#d4d4d4"></div>
<div class="a" style="left:1px;top:370px;width:26px;height:1px;background:#c6c6c6"></div>
<div class="t" style="left:1.0px;width:26px;text-align:center;top:355.03px;font-size:12.6px;color:#262626;font-weight:normal;font-style:normal;">6</div>
<div class="a" style="left:27px;top:391px;width:917px;height:1px;background:#d4d4d4"></div>
<div class="a" style="left:1px;top:391px;width:26px;height:1px;background:#c6c6c6"></div>
<div class="t" style="left:1.0px;width:26px;text-align:center;top:376.03px;font-size:12.6px;color:#262626;font-weight:normal;font-style:normal;">7</div>
<div class="a" style="left:27px;top:412px;width:917px;height:1px;background:#d4d4d4"></div>
<div class="a" style="left:1px;top:412px;width:26px;height:1px;background:#c6c6c6"></div>
<div class="t" style="left:1.0px;width:26px;text-align:center;top:397.03px;font-size:12.6px;color:#262626;font-weight:normal;font-style:normal;">8</div>
<div class="a" style="left:27px;top:433px;width:917px;height:1px;background:#d4d4d4"></div>
<div class="a" style="left:1px;top:433px;width:26px;height:1px;background:#c6c6c6"></div>
<div class="t" style="left:1.0px;width:26px;text-align:center;top:418.03px;font-size:12.6px;color:#262626;font-weight:normal;font-style:normal;">9</div>
<div class="a" style="left:27px;top:454px;width:917px;height:1px;background:#d4d4d4"></div>
<div class="a" style="left:1px;top:454px;width:26px;height:1px;background:#c6c6c6"></div>
<div class="t" style="left:1.0px;width:26px;text-align:center;top:439.03px;font-size:12.6px;color:#262626;font-weight:normal;font-style:normal;">10</div>
<div class="a" style="left:27px;top:475px;width:917px;height:1px;background:#d4d4d4"></div>
<div class="a" style="left:1px;top:475px;width:26px;height:1px;background:#c6c6c6"></div>
<div class="t" style="left:1.0px;width:26px;text-align:center;top:460.03px;font-size:12.6px;color:#262626;font-weight:normal;font-style:normal;">11</div>
<div class="a" style="left:27px;top:496px;width:917px;height:1px;background:#d4d4d4"></div>
<div class="a" style="left:1px;top:496px;width:26px;height:1px;background:#c6c6c6"></div>
<div class="t" style="left:1.0px;width:26px;text-align:center;top:481.03px;font-size:12.6px;color:#262626;font-weight:normal;font-style:normal;">12</div>
<div class="a" style="left:27px;top:517px;width:917px;height:1px;background:#d4d4d4"></div>
<div class="a" style="left:1px;top:517px;width:26px;height:1px;background:#c6c6c6"></div>
<div class="t" style="left:1.0px;width:26px;text-align:center;top:502.03px;font-size:12.6px;color:#262626;font-weight:normal;font-style:normal;">13</div>
<div class="a" style="left:27px;top:538px;width:917px;height:1px;background:#d4d4d4"></div>
<div class="a" style="left:1px;top:538px;width:26px;height:1px;background:#c6c6c6"></div>
<div class="t" style="left:1.0px;width:26px;text-align:center;top:523.03px;font-size:12.6px;color:#262626;font-weight:normal;font-style:normal;">14</div>
<div class="a" style="left:27px;top:559px;width:917px;height:1px;background:#d4d4d4"></div>
<div class="a" style="left:1px;top:559px;width:26px;height:1px;background:#c6c6c6"></div>
<div class="t" style="left:1.0px;width:26px;text-align:center;top:544.03px;font-size:12.6px;color:#262626;font-weight:normal;font-style:normal;">15</div>
<div class="a" style="left:27px;top:580px;width:917px;height:1px;background:#d4d4d4"></div>
<div class="a" style="left:1px;top:580px;width:26px;height:1px;background:#c6c6c6"></div>
<div class="t" style="left:1.0px;width:26px;text-align:center;top:565.03px;font-size:12.6px;color:#262626;font-weight:normal;font-style:normal;">16</div>
<div class="a" style="left:27px;top:601px;width:917px;height:1px;background:#d4d4d4"></div>
<div class="a" style="left:1px;top:601px;width:26px;height:1px;background:#c6c6c6"></div>
<div class="t" style="left:1.0px;width:26px;text-align:center;top:586.03px;font-size:12.6px;color:#262626;font-weight:normal;font-style:normal;">17</div>
<div class="a" style="left:27px;top:622px;width:917px;height:1px;background:#d4d4d4"></div>
<div class="a" style="left:1px;top:622px;width:26px;height:1px;background:#c6c6c6"></div>
<div class="t" style="left:1.0px;width:26px;text-align:center;top:607.03px;font-size:12.6px;color:#262626;font-weight:normal;font-style:normal;">18</div>
<div class="a" style="left:27px;top:643px;width:917px;height:1px;background:#d4d4d4"></div>
<div class="a" style="left:1px;top:643px;width:26px;height:1px;background:#c6c6c6"></div>
<div class="t" style="left:1.0px;width:26px;text-align:center;top:628.03px;font-size:12.6px;color:#262626;font-weight:normal;font-style:normal;">19</div>
<div class="a" style="left:27px;top:664px;width:917px;height:1px;background:#d4d4d4"></div>
<div class="a" style="left:1px;top:664px;width:26px;height:1px;background:#c6c6c6"></div>
<div class="t" style="left:1.0px;width:26px;text-align:center;top:649.03px;font-size:12.6px;color:#262626;font-weight:normal;font-style:normal;">20</div>
<div class="a" style="left:27px;top:685px;width:917px;height:1px;background:#d4d4d4"></div>
<div class="a" style="left:1px;top:685px;width:26px;height:1px;background:#c6c6c6"></div>
<div class="a" style="left:26px;top:204px;width:1px;height:462px;background:#bdbdbd"></div>
<div class="a" style="left:1px;top:223px;width:943px;height:1px;background:#bdbdbd"></div>
<div class="a" style="left:943px;top:223px;width:1px;height:443px;background:#ababab"></div>
<div class="a" style="left:1px;top:665px;width:943px;height:1px;background:#ababab"></div>
<svg class="a" style="left:0;top:200px" width="30" height="25" viewBox="0 200 30 25"><path d="M23 208.5v11.5h-11.5z" fill="#bfbfbf"/></svg>
<div class="a" style="left:27px;top:224px;width:494px;height:41px;background:#6dcf48"></div>
<div class="a" style="left:27px;top:266px;width:184px;height:167px;background:#ffe699"></div>
<div class="t" style="left:28.76px;top:238.23px;font-size:13.9px;color:#000;font-weight:bold;font-style:normal;transform:scaleX(1.0421);transform-origin:0 0;">Наименование</div>
<div class="t" style="left:222.95px;top:228.93px;font-size:13.9px;color:#000;font-weight:bold;font-style:normal;transform:scaleX(0.9812);transform-origin:0 0;">Стоимость,</div>
<div class="t" style="left:247.04px;top:249.13px;font-size:13.9px;color:#000;font-weight:bold;font-style:normal;transform:scaleX(1.0632);transform-origin:0 0;">руб.</div>
<div class="t" style="left:321.69px;top:228.93px;font-size:13.9px;color:#000;font-weight:bold;font-style:normal;transform:scaleX(1.0078);transform-origin:0 0;">Количество,</div>
<div class="t" style="left:353.53px;top:249.13px;font-size:13.9px;color:#000;font-weight:bold;font-style:normal;transform:scaleX(1.0988);transform-origin:0 0;">шт.</div>
<div class="t" style="left:442.73px;top:228.93px;font-size:13.9px;color:#000;font-weight:bold;font-style:normal;transform:scaleX(1.0334);transform-origin:0 0;">Сумма,</div>
<div class="t" style="left:452.63px;top:249.13px;font-size:13.9px;color:#000;font-weight:bold;font-style:normal;transform:scaleX(1.0707);transform-origin:0 0;">руб.</div>
<div class="t" style="left:28.96px;top:269.81px;font-size:14.4px;color:#000;font-weight:normal;font-style:normal;transform:scaleX(1.0320);transform-origin:0 0;">Стол компьютерный</div>
<div class="t" style="left:266.47px;top:269.81px;font-size:14.4px;color:#000;font-weight:normal;font-style:normal;transform:scaleX(1.0483);transform-origin:0 0;">11 990</div>
<div class="t" style="right:553px;top:269.81px;font-size:14.4px;color:#000;font-weight:normal;font-style:normal;">1</div>
<div class="t" style="left:418.68px;top:269.81px;font-size:14.4px;color:#000;font-weight:normal;font-style:normal;transform:scaleX(0.9979);transform-origin:0 0;">=B2*C2</div>
<div class="t" style="left:28.54px;top:290.81px;font-size:14.4px;color:#000;font-weight:normal;font-style:normal;transform:scaleX(1.0051);transform-origin:0 0;">Кресло офисное</div>
<div class="t" style="left:275.71px;top:290.81px;font-size:14.4px;color:#000;font-weight:normal;font-style:normal;transform:scaleX(0.9941);transform-origin:0 0;">4 990</div>
<div class="t" style="right:553px;top:290.81px;font-size:14.4px;color:#000;font-weight:normal;font-style:normal;">2</div>
<div class="t" style="left:418.67px;top:290.81px;font-size:14.4px;color:#000;font-weight:normal;font-style:normal;transform:scaleX(1.0155);transform-origin:0 0;">=B3*C3</div>
<div class="t" style="left:28.55px;top:311.81px;font-size:14.4px;color:#000;font-weight:normal;font-style:normal;transform:scaleX(0.9992);transform-origin:0 0;">Монитор 27 LED</div>
<div class="t" style="left:266.19px;top:311.81px;font-size:14.4px;color:#000;font-weight:normal;font-style:normal;transform:scaleX(1.0287);transform-origin:0 0;">14 990</div>
<div class="t" style="right:553px;top:311.81px;font-size:14.4px;color:#000;font-weight:normal;font-style:normal;">1</div>
<div class="t" style="left:418.67px;top:311.81px;font-size:14.4px;color:#000;font-weight:normal;font-style:normal;transform:scaleX(1.0125);transform-origin:0 0;">=B4*C4</div>
<div class="t" style="left:28.49px;top:332.81px;font-size:14.4px;color:#000;font-weight:normal;font-style:normal;transform:scaleX(1.0531);transform-origin:0 0;">Моноблок</div>
<div class="t" style="left:266.19px;top:332.81px;font-size:14.4px;color:#000;font-weight:normal;font-style:normal;transform:scaleX(1.0287);transform-origin:0 0;">19 990</div>
<div class="t" style="right:553px;top:332.81px;font-size:14.4px;color:#000;font-weight:normal;font-style:normal;">1</div>
<div class="t" style="left:418.67px;top:332.81px;font-size:14.4px;color:#000;font-weight:normal;font-style:normal;transform:scaleX(1.0155);transform-origin:0 0;">=B5*C5</div>
<div class="t" style="left:28.50px;top:353.81px;font-size:14.4px;color:#000;font-weight:normal;font-style:normal;transform:scaleX(1.0381);transform-origin:0 0;">Мышь оптическая</div>
<div class="t" style="left:286.34px;top:353.81px;font-size:14.4px;color:#000;font-weight:normal;font-style:normal;transform:scaleX(1.0505);transform-origin:0 0;">790</div>
<div class="t" style="right:553px;top:353.81px;font-size:14.4px;color:#000;font-weight:normal;font-style:normal;">3</div>
<div class="t" style="left:418.67px;top:353.81px;font-size:14.4px;color:#000;font-weight:normal;font-style:normal;transform:scaleX(1.0155);transform-origin:0 0;">=B6*C6</div>
<div class="t" style="left:28.52px;top:374.81px;font-size:14.4px;color:#000;font-weight:normal;font-style:normal;transform:scaleX(1.0266);transform-origin:0 0;">Клавиатура Bluetooth</div>
<div class="t" style="left:274.08px;top:374.81px;font-size:14.4px;color:#000;font-weight:normal;font-style:normal;transform:scaleX(1.0402);transform-origin:0 0;">1 190</div>
<div class="t" style="right:553px;top:374.81px;font-size:14.4px;color:#000;font-weight:normal;font-style:normal;">2</div>
<div class="t" style="left:418.67px;top:374.81px;font-size:14.4px;color:#000;font-weight:normal;font-style:normal;transform:scaleX(1.0185);transform-origin:0 0;">=B7*C7</div>
<div class="t" style="left:28.98px;top:395.81px;font-size:14.4px;color:#000;font-weight:normal;font-style:normal;transform:scaleX(1.0004);transform-origin:0 0;">Сетевой фильтр</div>
<div class="t" style="left:286.42px;top:395.81px;font-size:14.4px;color:#000;font-weight:normal;font-style:normal;transform:scaleX(1.0471);transform-origin:0 0;">890</div>
<div class="t" style="right:553px;top:395.81px;font-size:14.4px;color:#000;font-weight:normal;font-style:normal;">2</div>
<div class="t" style="left:418.67px;top:395.81px;font-size:14.4px;color:#000;font-weight:normal;font-style:normal;transform:scaleX(1.0155);transform-origin:0 0;">=B8*C8</div>
<div class="t" style="left:28.54px;top:416.81px;font-size:14.4px;color:#000;font-weight:normal;font-style:normal;transform:scaleX(1.0050);transform-origin:0 0;">Батарейки AAA</div>
<div class="t" style="left:294.69px;top:416.81px;font-size:14.4px;color:#000;font-weight:normal;font-style:normal;transform:scaleX(1.0633);transform-origin:0 0;">49</div>
<div class="t" style="right:553px;top:416.81px;font-size:14.4px;color:#000;font-weight:normal;font-style:normal;">7</div>
<div class="t" style="left:418.67px;top:416.81px;font-size:14.4px;color:#000;font-weight:normal;font-style:normal;transform:scaleX(1.0170);transform-origin:0 0;">=B9*C9</div>
<div class="a" style="left:26px;top:265px;width:495px;height:1px;background:#000"></div>
<div class="a" style="left:26px;top:286px;width:495px;height:1px;background:#000"></div>
<div class="a" style="left:26px;top:307px;width:495px;height:1px;background:#000"></div>
<div class="a" style="left:26px;top:328px;width:495px;height:1px;background:#000"></div>
<div class="a" style="left:26px;top:349px;width:495px;height:1px;background:#000"></div>
<div class="a" style="left:26px;top:370px;width:495px;height:1px;background:#000"></div>
<div class="a" style="left:26px;top:391px;width:495px;height:1px;background:#000"></div>
<div class="a" style="left:26px;top:412px;width:495px;height:1px;background:#000"></div>
<div class="a" style="left:26px;top:433px;width:495px;height:1px;background:#000"></div>
<div class="a" style="left:210px;top:224px;width:1px;height:210px;background:#000"></div>
<div class="a" style="left:313px;top:224px;width:1px;height:210px;background:#000"></div>
<div class="a" style="left:416px;top:224px;width:1px;height:210px;background:#000"></div>
<div class="a" style="left:520px;top:224px;width:1px;height:210px;background:#000"></div>
<div class="a" style="left:415px;top:264px;width:107px;height:24px;border:2px solid #0a7340"></div>
<div class="a" style="left:517px;top:283px;width:7px;height:7px;background:#0a7340;border-left:1px solid #fff;border-top:1px solid #fff"></div>
<div class="a" style="left:416px;top:222px;width:105px;height:2px;background:#0a7340"></div>
<div class="a" style="left:25px;top:265px;width:2px;height:22px;background:#0a7340"></div>
<div class="a" style="left:469px;top:266px;width:1px;height:20px;background:#000"></div>
<div class="a" style="left:947px;top:206px;width:15px;height:460px;background:#dedede"></div>
<div class="a" style="left:947px;top:206px;width:15px;height:15px;background:#fff;border:1px solid #ababab"></div>
<div class="a" style="left:947px;top:221px;width:15px;height:409px;background:#fff;border:1px solid #ababab"></div>
<div class="a" style="left:947px;top:651px;width:15px;height:15px;background:#fff;border:1px solid #ababab"></div>
<svg class="a" style="left:940px;top:200px" width="26" height="470" viewBox="940 200 26 470"><path d="M950.5 216h8l-4-4z" fill="#666"/><path d="M950.5 656.5h8l-4 4z" fill="#666"/></svg>
<div class="a" style="left:1px;top:666px;width:963px;height:28px;background:#e6e6e6"></div>
<div class="a" style="left:101px;top:666px;width:107px;height:25px;background:#fff;border-left:1px solid #c6c6c6;border-right:1px solid #c6c6c6"></div>
<div class="a" style="left:101px;top:688px;width:107px;height:2px;background:#0a7340"></div>
<div class="t" style="left:112.15px;top:672.66px;font-size:13.4px;color:#1e6b43;font-weight:bold;font-style:normal;transform:scaleX(0.9740);transform-origin:0 0;">microexcel.ru</div>
<svg class="a" style="left:0;top:665px" width="966" height="30" viewBox="0 665 966 30"><path d="M31.5 676v8l-4-4z" fill="#c0c0c0"/><path d="M56.5 676v8l4-4z" fill="#c0c0c0"/><circle cx="248.7" cy="680.2" r="7.3" fill="none" stroke="#777" stroke-width="1.3"/><path d="M248.7 676.2v8M244.7 680.2h8" stroke="#555" stroke-width="1.4"/><circle cx="580" cy="676" r=".8" fill="#999"/><circle cx="580" cy="680" r=".8" fill="#999"/><circle cx="580" cy="684" r=".8" fill="#999"/></svg>
<div class="a" style="left:596px;top:673px;width:348px;height:15px;background:#dedede"></div>
<div class="a" style="left:596px;top:673px;width:16px;height:15px;background:#fff;border:1px solid #ababab"></div>
<div class="a" style="left:611px;top:673px;width:287px;height:15px;background:#fff;border:1px solid #ababab"></div>
<div class="a" style="left:929px;top:673px;width:15px;height:15px;background:#fff;border:1px solid #ababab"></div>
<svg class="a" style="left:590px;top:670px" width="360" height="22" viewBox="590 670 360 22"><path d="M606 676.5v8l-4-4z" fill="#555"/><path d="M934.5 676.5v8l4-4z" fill="#555"/></svg>
<div class="a" style="left:1px;top:694px;width:963px;height:21px;background:#f3f3f3"></div>
<div class="a" style="left:1px;top:694px;width:963px;height:1px;background:#dadada"></div>
<div class="t" style="left:8.69px;top:698.48px;font-size:11.6px;color:#222;font-weight:normal;font-style:normal;transform:scaleX(0.9811);transform-origin:0 0;">Правка</div>
<div class="t" style="left:915.60px;top:698.78px;font-size:11.6px;color:#a6a6a6;font-weight:normal;font-style:normal;transform:scaleX(0.9238);transform-origin:0 0;">100 %</div>
<svg class="a" style="left:0;top:694px" width="966" height="21" viewBox="0 694 966 21"><path d="M68.3 702.5v8h11.4v-11.4h-6" fill="none" stroke="#333" stroke-width="1"/><rect x="73" y="699" width="7" height="2.2" fill="#333"/><path d="M70 703.8h9M70 706.3h9M70 708.8h9" stroke="#444" stroke-width="1.1" stroke-dasharray="2 .9"/><circle cx="70.4" cy="700.9" r="2.6" fill="#444"/><rect x="677.5" y="699.5" width="12" height="12" fill="none" stroke="#555"/><path d="M677.5 703.5h12M677.5 707.5h12M681.5 699.5v12M685.5 699.5v12" stroke="#555"/><rect x="715.5" y="699.5" width="13" height="12" fill="none" stroke="#555"/><rect x="718.5" y="701.5" width="7" height="8" fill="none" stroke="#555"/><path d="M720 703.5h4M720 705.5h4M720 707.5h4" stroke="#555" stroke-width=".8"/><rect x="752.5" y="699.5" width="14" height="12" fill="none" stroke="#555"/><path d="M757.5 699.5v5h4v-5" fill="none" stroke="#555"/><path d="M784 704.5h6" stroke="#444" stroke-width="1.6"/><path d="M794.5 704.5h99" stroke="#b5b5b5"/><path d="M844.5 701.5v6" stroke="#b5b5b5"/><path d="M897.5 704.5h7M901 701v7" stroke="#444" stroke-width="1.6"/></svg>
<svg class="a" style="left:0;top:0" width="966" height="717" viewBox="0 0 966 717"><rect x="304.6" y="165.9" width="67.8" height="32" rx="4" fill="none" stroke="#ff0000" stroke-width="3"/><rect x="413.8" y="261.4" width="114" height="28.8" rx="4" fill="none" stroke="#ff0000" stroke-width="3"/><path d="M376 185.4Q416 188.5 457 186.5Q459 188 455 190Q447 192.5 442.5 194.8L631.5 224.8L631.2 228.8L442.5 198.5Q445 204 452.8 209L452 209.5Q414 197.5 376 185.4z" fill="#ff0000"/><path d="M541.7 273.5Q554 265 564.7 257.1Q562 262 562.5 266.7L623.5 251.2Q626.5 252 625.6 254.7L562.3 270.4Q565 274 569.7 277.3Q556 274 541.7 273.5z" fill="#ff0000"/></svg>
<div class="t" style="left:642.27px;top:196.56px;font-size:74.0px;color:#ff0000;font-weight:bold;font-style:italic;transform:scaleX(0.6938);transform-origin:0 0;-webkit-text-stroke:1.6px #ff0000;">E</div>
<div class="t" style="left:676.49px;top:196.56px;font-size:74.0px;color:#ff0000;font-weight:bold;font-style:italic;transform:scaleX(0.8230);transform-origin:0 0;-webkit-text-stroke:1.6px #ff0000;">n</div>
<div class="t" style="left:717.46px;top:196.56px;font-size:74.0px;color:#ff0000;font-weight:bold;font-style:italic;transform:scaleX(0.9417);transform-origin:0 0;-webkit-text-stroke:1.6px #ff0000;">t</div>
<div class="t" style="left:742.76px;top:196.56px;font-size:74.0px;color:#ff0000;font-weight:bold;font-style:italic;transform:scaleX(0.7838);transform-origin:0 0;-webkit-text-stroke:1.6px #ff0000;">e</div>
<div class="t" style="left:778.36px;top:196.56px;font-size:74.0px;color:#ff0000;font-weight:bold;font-style:italic;transform:scaleX(0.8494);transform-origin:0 0;-webkit-text-stroke:1.6px #ff0000;">r</div>
<div class="t" style="left:650.0px;width:60px;text-align:center;top:208.94px;font-size:12.0px;color:#262626;font-weight:normal;font-style:normal;">G</div>
<div class="t" style="left:714.0px;width:60px;text-align:center;top:208.94px;font-size:12.0px;color:#262626;font-weight:normal;font-style:normal;">H</div>
<div class="t" style="left:778.0px;width:60px;text-align:center;top:208.94px;font-size:12.0px;color:#262626;font-weight:normal;font-style:normal;">I</div>
<div class="a" style="left:0;top:65px;width:1px;height:652px;background:#007440"></div>
<div class="a" style="left:964px;top:65px;width:2px;height:652px;background:#007440"></div>
<div class="a" style="left:0;top:715px;width:966px;height:2px;background:#007440"></div>
</body></html>
